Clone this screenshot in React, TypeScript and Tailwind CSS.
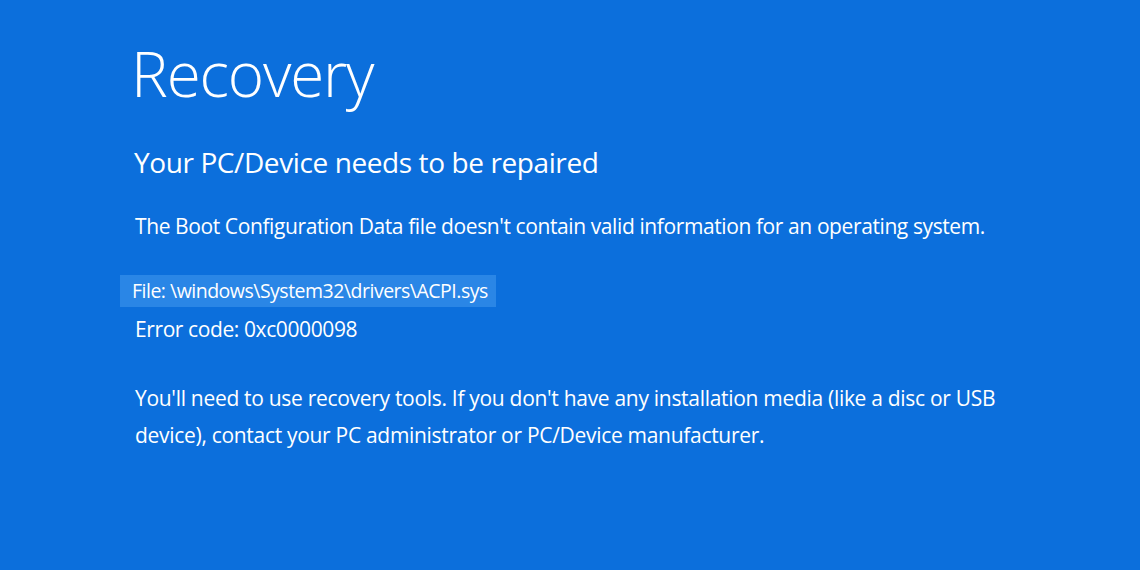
export default function App() {
  return (
    <div className="w-[1140px] h-[570px] bg-[#0c6fdc] text-white font-['Open_Sans',sans-serif] overflow-hidden">
      <div className="pl-[131px] pt-[33px] flex flex-col items-start">
        <h1 className="text-[62px] leading-[80px] font-light tracking-[-1.2px]">Recovery</h1>
        <h2 className="mt-[29px] text-[28px] leading-[40px] tracking-[-0.4px] pl-[3px]">Your PC/Device needs to be repaired</h2>
        <p className="mt-[29px] text-[21px] leading-[30px] tracking-[-0.4px] pl-[4px]">
          The Boot Configuration Data file doesn't contain valid information for an operating system.
        </p>
        <div className="mt-[34px] -ml-[11px] bg-[#2a86e6] w-[376px] h-[32px] pl-[12px] flex items-center">
          <span className="text-[19.5px] leading-[28px] tracking-[-0.5px]">File: \windows\System32\drivers\ACPI.sys</span>
        </div>
        <p className="mt-[4px] text-[21px] leading-[36px] tracking-[-0.4px] pl-[4px]">Error code: 0xc0000098</p>
        <p className="mt-[33px] text-[21px] leading-[37px] tracking-[-0.3px] pl-[4px] w-[890px]">
          You'll need to use recovery tools. If you don't have any installation media (like a disc or USB device), contact your PC administrator or PC/Device manufacturer.
        </p>
      </div>
    </div>
  );
}
